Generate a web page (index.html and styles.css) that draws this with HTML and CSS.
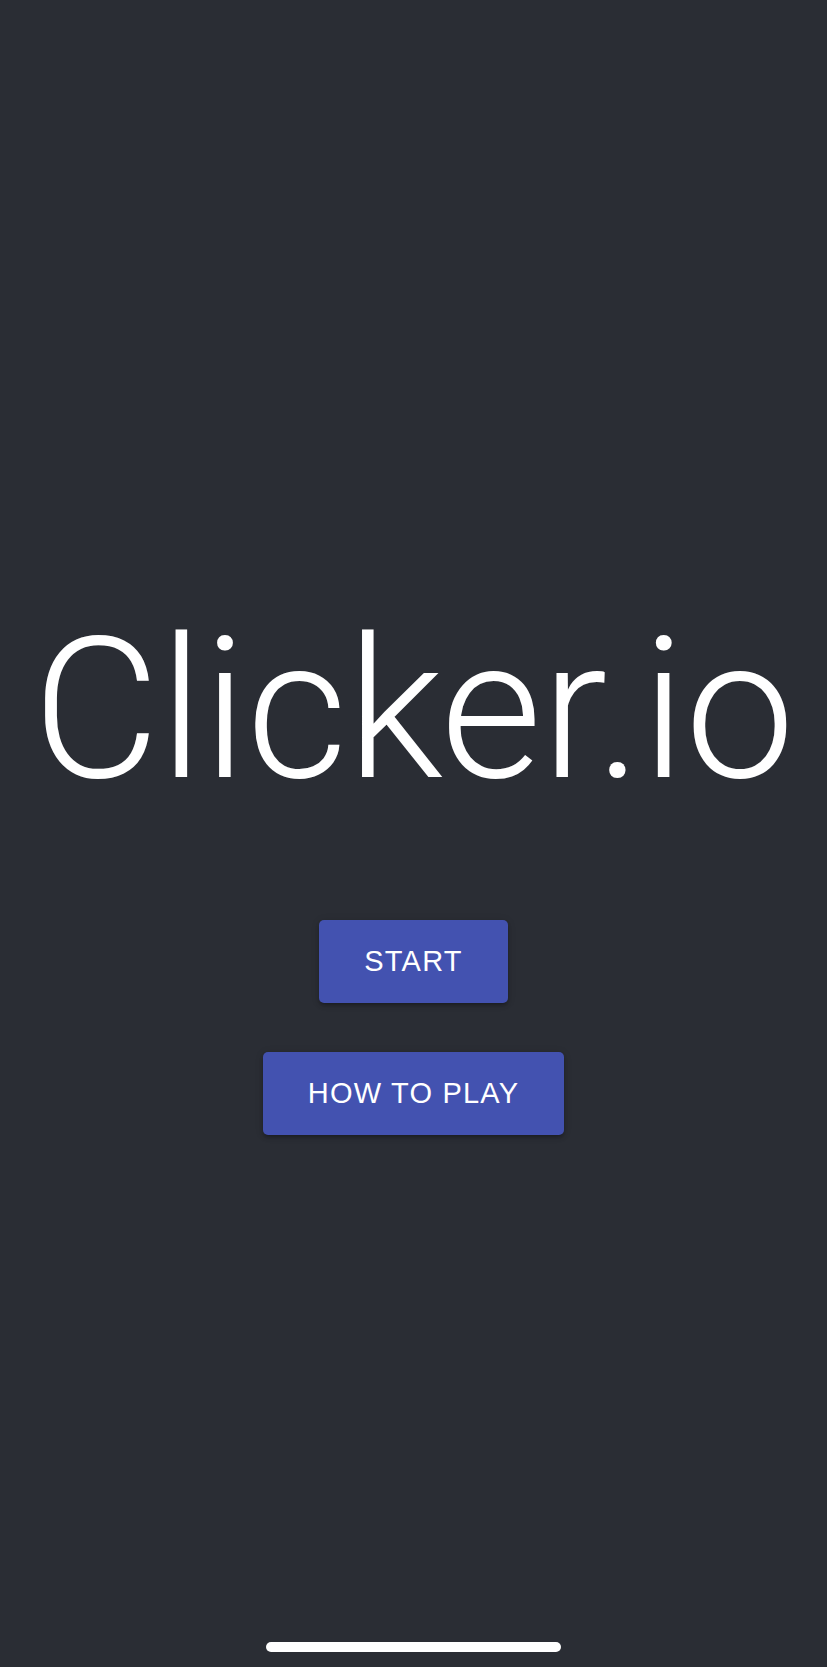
FILE: index.html
```html
<!DOCTYPE html>
<html lang="en">
<head>
<meta charset="utf-8">
<title>Clicker.io</title>
<link rel="stylesheet" href="styles.css">
</head>
<body>
<div class="screen">
  <main class="menu">
    <h1 class="title">Clicker.io</h1>
    <div class="actions">
      <button class="btn">START</button>
      <button class="btn">HOW TO PLAY</button>
    </div>
  </main>
  <div class="home-bar"></div>
</div>
</body>
</html>
```
FILE: styles.css
```css
html, body {
  margin: 0;
  padding: 0;
  background: #2a2d34;
}
.screen {
  width: 827px;
  height: 1667px;
  display: flex;
  flex-direction: column;
  align-items: center;
  background: #2a2d34;
  color: #ffffff;
}
.menu {
  flex: 1;
  display: flex;
  flex-direction: column;
  align-items: center;
  padding-top: 600px;
}
.title {
  margin: 0;
  font-family: Roboto, "Liberation Sans", sans-serif;
  font-weight: 300;
  font-size: 196px;
  line-height: 220px;
  letter-spacing: -0.5px;
  color: #ffffff;
}
.actions {
  margin-top: 100px;
  display: flex;
  flex-direction: column;
  align-items: center;
  gap: 49px;
}
.btn {
  font-family: "Liberation Sans", Arial, sans-serif;
  font-size: 29px;
  letter-spacing: 1.2px;
  color: #ffffff;
  background: #4352b0;
  border: none;
  border-radius: 5px;
  height: 83px;
  padding: 0 45px;
  box-shadow: 0 3px 3px -2px rgba(0,0,0,0.2), 0 3px 4px 0 rgba(0,0,0,0.14), 0 1px 8px 0 rgba(0,0,0,0.12);
}
.home-bar {
  width: 295px;
  height: 10px;
  border-radius: 5px;
  background: #ffffff;
  margin-bottom: 15px;
}
```
